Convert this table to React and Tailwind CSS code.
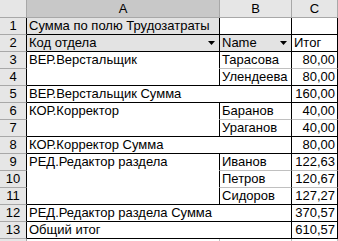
const font = { fontFamily: '"Liberation Sans", Arial, sans-serif' };

const Cell = ({ className = "", children }) => (
  <div
    className={`h-full flex items-end shrink-0 border-r border-b pb-[1px] leading-[15px] overflow-hidden whitespace-nowrap ${className}`}
  >
    {children}
  </div>
);

const Drop = () => (
  <div className="ml-auto w-[15px] h-[15px] flex items-center justify-center self-center">
    <svg width="7" height="4" viewBox="0 0 7 4">
      <path d="M0 0h7L3.5 4z" fill="#000" />
    </svg>
  </div>
);

const RowNum = ({ n }) => (
  <div className="w-[27px] h-full shrink-0 flex items-end justify-center pb-[1px] leading-[15px] bg-[#e6e6e6] border-r border-r-black border-b border-b-[#a8a8a8] text-black">
    {n}
  </div>
);

const groups = [
  {
    name: "ВЕР.Верстальщик",
    items: [
      ["Тарасова", "80,00"],
      ["Улендеева", "80,00"],
    ],
    total: "160,00",
  },
  {
    name: "КОР.Корректор",
    items: [
      ["Баранов", "40,00"],
      ["Ураганов", "40,00"],
    ],
    total: "80,00",
  },
  {
    name: "РЕД.Редактор раздела",
    items: [
      ["Иванов", "122,63"],
      ["Петров", "120,67"],
      ["Сидоров", "127,27"],
    ],
    total: "370,57",
  },
];

export default function App() {
  let n = 3;
  const body = [];
  groups.forEach((g) => {
    g.items.forEach(([name, val], i) => {
      const last = i === g.items.length - 1;
      const line = last ? "border-b-black" : "border-b-[#c0c0c0]";
      body.push(
        <div key={n} className="flex h-[17px]">
          <RowNum n={n} />
          <Cell
            className={`w-[193px] pl-[2px] border-r-black ${last ? "border-b-black" : "border-b-white"}`}
          >
            {i === 0 ? g.name : ""}
          </Cell>
          <Cell className={`w-[72px] pl-[2px] border-r-black ${line}`}>{name}</Cell>
          <Cell className={`w-[46px] justify-end pr-[2px] border-r-black ${line}`}>{val}</Cell>
        </div>
      );
      n++;
    });
    body.push(
      <div key={n} className="flex h-[17px]">
        <RowNum n={n} />
        <Cell className="w-[265px] pl-[2px] border-r-black border-b-black">{g.name} Сумма</Cell>
        <Cell className="w-[46px] justify-end pr-[2px] border-r-black border-b-black">{g.total}</Cell>
      </div>
    );
    n++;
  });

  return (
    <div className="w-[338px] h-[241px] overflow-hidden bg-white text-[13px] text-black" style={font}>
      <div className="flex h-[18px]">
        <div className="w-[27px] h-full shrink-0 bg-[#e6e6e6] border-r border-b border-[#a8a8a8]" />
        <div className="w-[193px] h-full shrink-0 flex items-end justify-center pb-[1px] leading-[15px] bg-[#c8c8c8] border-r border-b border-[#a8a8a8]">
          A
        </div>
        <div className="w-[72px] h-full shrink-0 flex items-end justify-center pb-[1px] leading-[15px] bg-[#e6e6e6] border-r border-b border-[#a8a8a8]">
          B
        </div>
        <div className="w-[46px] h-full shrink-0 flex items-end justify-center pb-[1px] leading-[15px] bg-[#e6e6e6] border-r border-b border-[#a8a8a8]">
          C
        </div>
      </div>

      <div className="flex h-[17px]">
        <RowNum n={1} />
        <Cell className="w-[193px] pl-[2px] bg-[#e3e3e3] border-r-black border-b-black">
          Сумма по полю Трудозатраты
        </Cell>
        <Cell className="w-[72px] border-r-black border-b-black" />
        <Cell className="w-[46px] border-r-black border-b-black" />
      </div>

      <div className="flex h-[17px]">
        <RowNum n={2} />
        <Cell className="w-[193px] pl-[2px] bg-[#e3e3e3] border-r-black border-b-black">
          <span>Код отдела</span>
          <Drop />
        </Cell>
        <Cell className="w-[72px] pl-[2px] bg-[#e3e3e3] border-r-black border-b-black">
          <span>Name</span>
          <Drop />
        </Cell>
        <Cell className="w-[46px] pl-[2px] border-r-black border-b-black">Итог</Cell>
      </div>

      {body}

      <div className="flex h-[17px]">
        <RowNum n={13} />
        <Cell className="w-[265px] pl-[2px] border-r-black border-b-black">Общий итог</Cell>
        <Cell className="w-[46px] justify-end pr-[2px] border-r-black border-b-black">610,57</Cell>
      </div>

      <div className="flex h-[17px]">
        <div className="w-[27px] h-full shrink-0 bg-[#e6e6e6] border-r border-b border-[#a8a8a8]" />
        <div className="w-[193px] h-full shrink-0 border-r border-b border-[#c0c0c0]" />
        <div className="w-[72px] h-full shrink-0 border-r border-b border-[#c0c0c0]" />
        <div className="w-[46px] h-full shrink-0 border-r border-b border-[#c0c0c0]" />
      </div>
    </div>
  );
}
